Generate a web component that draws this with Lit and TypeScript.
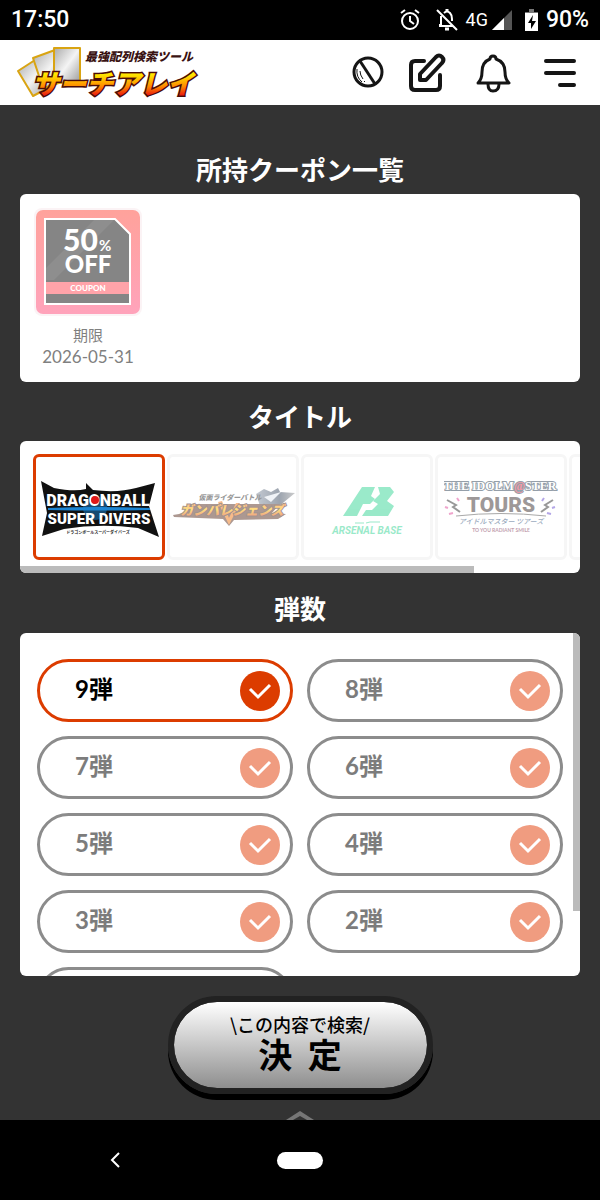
import { LitElement, html, css, svg } from 'lit';

const logoDragonBall = svg`
  <path d="M3 8 L16 15 Q36 19 48 16 L48 10 L55 17 Q80 20 98 15 L117 10 L111 33 L121 64 L100 55 Q62 50 26 56 L4 63 L9 40 Z" fill="#111"/>
  <circle cx="57" cy="35" r="12" fill="#1c84d2" opacity=".5"/>
  <path d="M10 35 Q60 33 112 35 L112 37 Q60 38 10 37 Z" fill="#1c84d2"/>
  <text class="dragon" x="60" y="33" text-anchor="middle">DRAGONBALL</text>
  <text class="divers" x="61" y="51" text-anchor="middle">SUPER DIVERS</text>
  <circle cx="57" cy="27" r="4" fill="#e01818"/>
  <text x="60" y="61" class="tiny" text-anchor="middle">ドラゴンボールスーパーダイバーズ</text>`;

const logoGanba = svg`
  <defs>
    <linearGradient id="fire" x1="0" y1="0" x2="0" y2="1">
      <stop offset="0" stop-color="#ff4a20"/><stop offset=".5" stop-color="#ffc100"/><stop offset="1" stop-color="#d01808"/>
    </linearGradient>
    <linearGradient id="steel" x1="0" y1="0" x2="1" y2="0">
      <stop offset="0" stop-color="#8893a3"/><stop offset=".6" stop-color="#3c4b60"/><stop offset="1" stop-color="#999"/>
    </linearGradient>
  </defs>
  <path d="M86 21 L94 16 L101 19 L108 15 L110 19 L125 20 L108 34 L91 36 Z" fill="url(#steel)"/>
  <path d="M94 24 L111 19 L101 29 Z" fill="#e2e8ef"/>
  <path d="M3 42 L15 40 L20 31 L110 31 L102 40 L116 41 L108 46 L64 47 L59 53 L53 46 L4 44 Z" fill="#5c3426"/>
  <text x="60" y="27" class="ganba-sub" text-anchor="middle">仮面ライダーバトル</text>
  <path d="M52 28 L59 45 L66 30 L70 30 L59 52 L48 29 Z" fill="#f07a18"/>
  <text x="62" y="42" class="ganba" text-anchor="middle">ガンバレジェンズ</text>`;

const logoArsenal = svg`
  <path d="M33 14 H46 L42 23 L46 26 L41 31 H34 L28 43 H14 Z" fill="#36d595"/>
  <path d="M49 14 H61 L65 19 L58 28 L65 33 L59 43 H33 L37 37 H43 L49 31 L44 28 L51 21 Z" fill="#36d595"/>
  <path d="M26 50 H35 M37 50 L41 49 H51" stroke="#36d595" stroke-width="1" fill="none"/>
  <text x="38" y="61" class="arsenal" text-anchor="middle">ARSENAL BASE</text>`;

const logoIdol = svg`
  <text x="56" y="17" class="idol" text-anchor="middle">THE IDOLM<tspan fill="#e8344e">@</tspan>STER</text>
  <path d="M3 27 L12 32 L9 34 L16 39 M109 27 L101 32 L104 34 L97 39" stroke="#333" stroke-width="2" fill="none"/>
  <path d="M1 34 l3 1 M5 41 l4 -1 M13 25 l2 3" stroke="#e04c9b" stroke-width="2"/>
  <path d="M111 34 l-3 1 M107 41 l-4 -1 M100 25 l-2 3" stroke="#6a50d0" stroke-width="2"/>
  <text x="57" y="39" class="tours" text-anchor="middle">TOURS</text>
  <path d="M12 43 Q57 38 102 43" stroke="#555" stroke-width="1" fill="none"/>
  <text x="57" y="51" class="idol-kana" text-anchor="middle">アイドルマスター ツアーズ</text>
  <text x="57" y="59" class="idol-en" text-anchor="middle">TO YOU RADIANT SMILE</text>`;

const titles = [
    { id: 'sdv', name: 'ドラゴンボールスーパーダイバーズ', w: 122, h: 68, logo: logoDragonBall },
    { id: 'ganba', name: '仮面ライダーバトル ガンバレジェンズ', w: 126, h: 68, logo: logoGanba },
    { id: 'arsenal', name: 'アーセナルベース', w: 76, h: 68, logo: logoArsenal },
    { id: 'tours', name: 'アイドルマスター ツアーズ', w: 114, h: 68, logo: logoIdol },
    { id: 'other', name: 'その他', w: 100, h: 68, logo: svg`` },
];

const rounds = [9, 8, 7, 6, 5, 4, 3, 2, 1];

class StatusBar extends LitElement {
    static styles = css`
      :host {
        display: flex;
        align-items: center;
        justify-content: space-between;
        height: 40px;
        padding: 0 11px;
        background: #000;
        color: #fff;
        font: 500 23px/40px Roboto, "Liberation Sans", sans-serif;
      }
      .right {
        display: flex;
        align-items: center;
      }
      .net {
        font-size: 18px;
        font-weight: 400;
        margin-left: 8px;
      }
      .alarm {
        margin-right: 16px;
      }
      .signal {
        margin-left: 4px;
      }
      .battery {
        margin: 0 8px 0 13px;
      }
    `;

    render() {
        return html`
        <span>17:50</span>
        <div class="right">
            <svg class="alarm" width="20" height="22" viewBox="0 0 20 22" fill="none" stroke="#fff" stroke-width="2">
                <circle cx="10" cy="12" r="8"/>
                <path d="M10 7 V12 L14 15 M1 4 L5 1 M19 4 L15 1"/>
            </svg>
            <svg width="22" height="22" viewBox="0 0 22 22" fill="none" stroke="#fff" stroke-width="2">
                <path d="M8 4 Q11 1 14 4 Q16 6 16 10 V12 M5 7 V16 H3 M3 17 H17 M1 1 L21 21"/>
                <path d="M9 20 H13 M11 0 V3" stroke-width="3"/>
            </svg>
            <span class="net">4G</span>
            <svg class="signal" width="20" height="20" viewBox="0 0 20 20">
                <path d="M20 0 V20 H0 Z" fill="#555"/>
                <path d="M12 8 V20 H0 Z" fill="#fff"/>
            </svg>
            <svg class="battery" width="13" height="22" viewBox="0 0 13 22">
                <path d="M4 0 H9 V3 H13 V7 H0 V3 H4 Z" fill="#777"/>
                <path d="M0 4 H13 V22 H0 Z" fill="#fff"/>
                <path d="M8 6 L3 14 H6 V20 L11 12 H7 Z" fill="#000"/>
            </svg>
            <span>90%</span>
        </div>`;
    }
}
customElements.define('status-bar', StatusBar);

class SiteHeader extends LitElement {
    static styles = css`
      :host {
        display: flex;
        align-items: center;
        justify-content: space-between;
        height: 65px;
        padding: 0 23px 0 15px;
        background: #fff;
      }
      .logo {
        display: flex;
      }
      .sub {
        font: italic 900 12px "Noto Sans CJK JP", sans-serif;
        fill: #3a1212;
      }
      .main {
        font: italic 900 27px "Noto Sans CJK JP", sans-serif;
        fill: url(#flame);
        stroke: #4a0c08;
        stroke-width: 3px;
        paint-order: stroke;
      }
      nav {
        display: flex;
        align-items: center;
      }
      button {
        display: flex;
        padding: 0;
        border: 0;
        background: none;
      }
      .ball {
        margin-right: 23px;
      }
      .edit {
        margin-right: 30px;
      }
      .bell {
        margin-right: 32px;
      }
    `;

    render() {
        return html`
        <a class="logo" href="#" aria-label="サーチアレイ">
            <svg width="190" height="60" viewBox="0 0 190 60">
                <defs>
                    <linearGradient id="flame" x1="0" y1="0" x2="0" y2="1">
                        <stop offset=".3" stop-color="#ffe600"/><stop offset=".6" stop-color="#ff8a00"/><stop offset=".85" stop-color="#e81010"/>
                    </linearGradient>
                    <linearGradient id="silver" x1="0" y1="0" x2="1" y2="1">
                        <stop offset="0" stop-color="#aaa"/><stop offset=".5" stop-color="#f4f4f4"/><stop offset="1" stop-color="#999"/>
                    </linearGradient>
                </defs>
                <g fill="url(#silver)" stroke="#d9a412" stroke-width="2" stroke-linejoin="round">
                    <path d="M3 28 L20 17 L35 44 L18 53 Z"/>
                    <path d="M18 15 L40 7 L50 38 L28 45 Z"/>
                    <path d="M39 5 L65 5 L65 39 L39 40 Z"/>
                </g>
                <text class="sub" x="70" y="18">最強配列検索ツール</text>
                <text class="main" x="17" y="51">サーチアレイ</text>
            </svg>
        </a>
        <nav>
            <button class="ball" aria-label="カプセル">
                <svg width="33" height="33" viewBox="0 0 33 33" fill="none" stroke="#151515" stroke-width="3">
                    <circle cx="16" cy="16" r="14"/>
                    <path d="M8 5 L23 28"/>
                    <path d="M5 13 Q4 21 10 26" stroke-width="1"/>
                    <path d="M8 15 Q8 19 11 23 M12 25 L13 26" stroke-width="1"/>
                </svg>
            </button>
            <button class="edit" aria-label="編集">
                <svg width="38" height="40" viewBox="0 0 38 40" fill="none" stroke="#151515" stroke-width="4" stroke-linecap="round" stroke-linejoin="round">
                    <path d="M16 8 H7 Q3 8 3 12 V33 Q3 37 7 37 H28 Q32 37 32 33 V22"/>
                    <path d="M12 27 V21 L28 4 Q31 1 34 4 Q37 7 34 10 L18 27 Z"/>
                </svg>
            </button>
            <button class="bell" aria-label="お知らせ">
                <svg width="35" height="40" viewBox="0 0 35 40" fill="none" stroke="#151515" stroke-width="3" stroke-linecap="round" stroke-linejoin="round">
                    <path d="M14 6 Q14 3 17 3 Q20 3 20 6 Q29 9 29 19 Q29 26 33 30 H2 Q6 26 6 19 Q6 9 14 6 Z"/>
                    <path d="M12 31 Q12 38 17 38 Q23 38 23 31"/>
                </svg>
            </button>
            <button aria-label="メニュー">
                <svg width="34" height="30" viewBox="0 0 34 30" stroke="#151515" stroke-width="4" stroke-linecap="round">
                    <path d="M3 3 H31 M3 15 H31 M17 27 H31"/>
                </svg>
            </button>
        </nav>`;
    }
}
customElements.define('site-header', SiteHeader);

class CouponItem extends LitElement {
    static properties = {
        limit: {},
    };
    static styles = css`
      :host {
        display: flex;
        flex-direction: column;
        align-items: center;
        width: 106px;
        color: #808080;
        font: 400 15px/22px Lato, "Noto Sans CJK JP", sans-serif;
        text-align: center;
      }
      svg {
        display: block;
        margin-bottom: 8px;
      }
      .date {
        font-size: 17px;
      }
      text {
        fill: #fff;
        font-family: Lato, sans-serif;
        font-weight: 900;
      }
      .num { font-size: 30px; }
      .pct { font-size: 15px; font-weight: 700; }
      .off { font-size: 24px; }
      .tag { font-size: 8px; }
    `;

    constructor() {
        super();
        this.limit = '';
    }

    render() {
        return html`
        <svg width="108" height="108" viewBox="0 0 108 108">
            <defs>
                <linearGradient id="pink" x1="0" y1="0" x2="0" y2="1">
                    <stop offset="0" stop-color="#ffa29b"/><stop offset="1" stop-color="#ffa3bb"/>
                </linearGradient>
            </defs>
            <rect width="108" height="108" rx="8" fill="#fbf3f5"/>
            <rect x="2" y="2" width="104" height="104" rx="7" fill="url(#pink)"/>
            <path d="M11 11 H81 L96 26 V96 H11 Z" fill="#858585" stroke="#fff" stroke-width="2"/>
            <path d="M12 60 L60 12 H80 L20 72 H12 Z" fill="#fff" opacity=".08"/>
            <rect x="12" y="74" width="83" height="12" fill="#ffa3a9"/>
            <text class="num" x="29" y="43">50</text>
            <text class="pct" x="65" y="43">%</text>
            <text class="off" x="54" y="65" text-anchor="middle">OFF</text>
            <text class="tag" x="54" y="83" text-anchor="middle">COUPON</text>
        </svg>
        <span>期限</span>
        <span class="date">${this.limit}</span>`;
    }
}
customElements.define('coupon-item', CouponItem);

class AppRoot extends LitElement {
    static properties = {
        game: { state: true },
        round: { state: true },
    };
    static styles = css`
      :host {
        display: flex;
        flex-direction: column;
        height: 100vh;
        min-height: 900px;
        background: #333;
        font-family: Lato, "Noto Sans CJK JP", sans-serif;
      }
      main {
        flex: 1;
        min-height: 0;
        display: flex;
        flex-direction: column;
        padding: 41px 20px 0;
      }
      h2 {
        margin: 0;
        color: #fff;
        font-size: 26px;
        font-weight: 700;
        line-height: 48px;
        text-align: center;
      }
      .panel {
        position: relative;
        flex: none;
        overflow: hidden;
        border-radius: 6px;
        background: #fff;
      }
      .coupons {
        display: flex;
        margin-bottom: 11px;
        padding: 14px 15px;
      }
      .titles {
        margin-bottom: 12px;
      }
      .strip {
        display: flex;
        gap: 2px;
        padding: 13px 13px 6px;
        overflow-x: auto;
        scrollbar-width: none;
      }
      .card {
        flex: none;
        display: flex;
        align-items: center;
        justify-content: center;
        box-sizing: border-box;
        width: 132px;
        height: 106px;
        border: 3px solid #f6f6f6;
        border-radius: 6px;
      }
      .card svg {
        opacity: 0.5;
      }
      .card.on {
        border-color: #dc3c00;
      }
      .card.on svg {
        opacity: 1;
      }
      .hidden {
        position: absolute;
        opacity: 0;
        pointer-events: none;
      }
      .track {
        height: 7px;
      }
      .thumb-x {
        width: 81%;
        height: 7px;
        background: #bbb;
      }
      .thumb-y {
        position: absolute;
        top: 0;
        right: 0;
        width: 7px;
        height: 81%;
        background: #bbb;
      }
      .panel.rounds {
        flex: 1;
        min-height: 0;
      }
      .grid {
        box-sizing: border-box;
        height: 100%;
        display: grid;
        grid-template-columns: 1fr 1fr;
        grid-auto-rows: 63px;
        gap: 14px;
        padding: 26px 17px;
        overflow-y: auto;
        scrollbar-width: none;
      }
      .pill {
        display: flex;
        align-items: center;
        justify-content: space-between;
        box-sizing: border-box;
        padding: 0 10px 0 35px;
        border: 3px solid #8c8c8c;
        border-radius: 32px;
        color: #7c7c7c;
        font-size: 24px;
        font-weight: 700;
      }
      .pill span {
        padding-bottom: 6px;
      }
      .pill .check {
        fill: #f09c80;
      }
      .pill.on {
        border-color: #dc3c00;
        color: #000;
      }
      .pill.on .check {
        fill: #dc3c00;
      }
      .submit {
        flex: none;
        align-self: center;
        width: 265px;
        height: 98px;
        margin: 20px 0 16px;
        padding: 0 0 4px;
        border: 6px solid #222;
        border-radius: 49px;
        background: linear-gradient(#fff, #8e8e8e) padding-box;
        box-shadow: 0 6px 0 #000;
        color: #000;
        font-family: "Noto Sans CJK JP", sans-serif;
        font-weight: 700;
      }
      .small {
        display: block;
        font-size: 18px;
        font-weight: 500;
        line-height: 22px;
      }
      .big {
        display: block;
        font-size: 34px;
        line-height: 38px;
        white-space: pre;
      }
      .up {
        flex: none;
        align-self: center;
        display: block;
      }
      .navbar {
        flex: none;
        display: grid;
        grid-template-columns: 1fr 1fr 1fr;
        align-items: center;
        justify-items: center;
        height: 80px;
        padding: 0 22px;
        background: #000;
      }
      .navbar button {
        display: flex;
        padding: 0;
        border: 0;
        background: none;
      }
      .navbar .home {
        width: 46px;
        height: 17px;
        border-radius: 9px;
        background: #fff;
      }
      .dragon {
        font: 900 16px Roboto, "Liberation Sans", sans-serif;
        fill: #fff;
      }
      .divers {
        font: 900 15px Roboto, "Liberation Sans", sans-serif;
        fill: #fff;
      }
      .tiny {
        font: 700 4px "Noto Sans CJK JP", sans-serif;
        fill: #222;
      }
      .ganba {
        font: italic 900 13px "Noto Sans CJK JP", sans-serif;
        fill: url(#fire);
        stroke: #47291f;
        stroke-width: 2px;
        paint-order: stroke;
      }
      .ganba-sub {
        font: italic 900 7px "Noto Sans CJK JP", sans-serif;
        fill: #333;
      }
      .arsenal {
        font: italic 700 10px Roboto, "Liberation Sans", sans-serif;
        fill: #36d595;
      }
      .idol {
        font: 700 12px "Liberation Serif", serif;
        fill: #fff;
        stroke: #2c4154;
        stroke-width: 2px;
        paint-order: stroke;
      }
      .tours {
        font: 900 21px Roboto, "Noto Sans", sans-serif;
        fill: #3c3232;
      }
      .idol-kana {
        font: italic 500 7px "Noto Sans CJK JP", sans-serif;
        fill: #34557c;
      }
      .idol-en {
        font: 700 5px Lato, sans-serif;
        fill: #84405c;
      }
    `;

    constructor() {
        super();
        this.game = 'sdv';
        this.round = 9;
    }

    render() {
        return html`
        <status-bar></status-bar>
        <site-header></site-header>
        <main>
            <h2>所持クーポン一覧</h2>
            <section class="panel coupons">
                <coupon-item limit="2026-05-31"></coupon-item>
            </section>

            <h2>タイトル</h2>
            <section class="panel titles">
                <div class="strip">
                    ${titles.map((t) => html`
                    <label class="card ${t.id === this.game ? 'on' : ''}">
                        <input class="hidden" type="radio" name="title" aria-label=${t.name}
                            .checked=${t.id === this.game} @change=${() => (this.game = t.id)}>
                        <svg width=${t.w} height=${t.h} viewBox="0 0 ${t.w} ${t.h}">${t.logo}</svg>
                    </label>`)}
                </div>
                <div class="track"><div class="thumb-x"></div></div>
            </section>

            <h2>弾数</h2>
            <section class="panel rounds">
                <div class="grid">
                    ${rounds.map((n) => html`
                    <label class="pill ${n === this.round ? 'on' : ''}">
                        <input class="hidden" type="radio" name="round"
                            .checked=${n === this.round} @change=${() => (this.round = n)}>
                        <span>${n}弾</span>
                        <svg width="40" height="40" viewBox="0 0 40 40">
                            <circle class="check" cx="20" cy="20" r="20"/>
                            <path d="M10 18 L18 26 L30 14" fill="none" stroke="#fff" stroke-width="3"/>
                        </svg>
                    </label>`)}
                </div>
                <div class="thumb-y"></div>
            </section>

            <button class="submit">
                <span class="small">\\この内容で検索/</span>
                <span class="big">決  定</span>
            </button>
            <svg class="up" width="28" height="10" viewBox="0 0 28 10">
                <path d="M0 10 L14 1 L28 10 Z" fill="#777"/>
                <path d="M7 10 L14 6 L21 10 Z" fill="#333"/>
            </svg>
        </main>
        <div class="navbar">
            <button aria-label="戻る">
                <svg width="12" height="18" viewBox="0 0 12 18" fill="none" stroke="#fff" stroke-width="2">
                    <path d="M10 2 L3 9 L10 16"/>
                </svg>
            </button>
            <button class="home" aria-label="ホーム"></button>
        </div>`;
    }
}
customElements.define('app-root', AppRoot);
